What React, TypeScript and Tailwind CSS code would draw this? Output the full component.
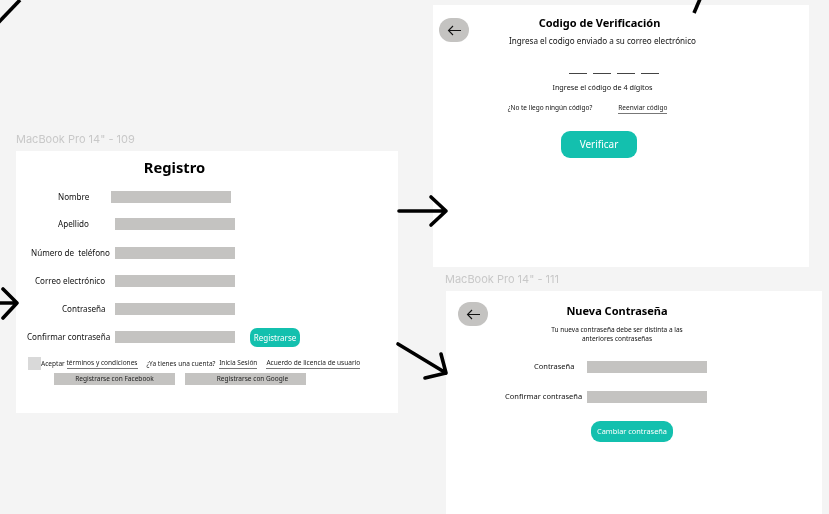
const font = { fontFamily: '"Noto Sans", sans-serif' };

function BackButton({ className }: { className: string }) {
  return (
    <div className={`flex h-[24px] w-[30px] items-center justify-center rounded-full bg-[#c4c3c1] ${className}`}>
      <svg width="15" height="11" viewBox="0 0 15 11" fill="none" stroke="#111" strokeWidth="1.1">
        <path d="M14 5.5H1.5M6 1L1.5 5.5L6 10" />
      </svg>
    </div>
  );
}

function Field({ label, labelClass, rowClass }: { label: string; labelClass: string; rowClass: string }) {
  return (
    <div className={`flex h-[12px] items-center ${rowClass}`}>
      <span className={`shrink-0 whitespace-nowrap leading-none text-[#111] ${labelClass}`}>{label}</span>
      <div className="h-[12px] w-[120px] shrink-0 bg-[#c4c3c1]" />
    </div>
  );
}

function Link({ children, className = "" }: { children: string; className?: string }) {
  return <span className={`whitespace-nowrap border-b border-[#777] pb-px text-[#222] ${className}`}>{children}</span>;
}

export default function App() {
  return (
    <div className="relative h-[514px] w-[829px] overflow-hidden bg-[#f4f4f4] blur-[0.35px]" style={font}>
      <div className="absolute left-[16px] top-[132px] font-['Inter'] text-[11px] leading-[14px] text-[#c8c8c8]">MacBook Pro 14" - 109</div>
      <div className="absolute left-[445px] top-[272px] font-['Inter'] text-[11px] leading-[14px] text-[#c8c8c8]">MacBook Pro 14" - 111</div>

      {/* Registro */}
      <section className="absolute left-[16px] top-[151px] h-[262px] w-[382px] bg-white">
        <h1 className="pr-[65px] pt-[6px] text-center text-[14.7px] font-bold leading-[20px] text-black">Registro</h1>
        <Field rowClass="mt-[14px]" label="Nombre" labelClass="w-[95px] pl-[42px] text-[8.1px]" />
        <Field rowClass="mt-[15px]" label="Apellido" labelClass="w-[99px] pl-[42px] text-[8.1px]" />
        <Field rowClass="mt-[17px]" label={"Número de\u00a0 teléfono"} labelClass="w-[99px] pl-[15px] text-[8.1px]" />
        <Field rowClass="mt-[16px]" label="Correo electrónico" labelClass="w-[99px] pl-[19px] text-[8.1px]" />
        <Field rowClass="mt-[16px]" label="Contraseña" labelClass="w-[99px] pl-[46px] text-[8.1px]" />
        <div className="relative">
          <Field rowClass="mt-[16px]" label="Confirmar contraseña" labelClass="w-[99px] pl-[11px] text-[8.1px]" />
          <button className="absolute left-[234px] top-[-3px] flex h-[19px] w-[50px] items-center justify-center rounded-[7px] bg-[#13c0ae] text-[8px] text-white">Registrarse</button>
        </div>
        <div className="mt-[14px] flex h-[13px] items-center pl-[12px] text-[6.55px] text-[#222]">
          <div className="h-[13px] w-[13px] shrink-0 bg-[#d9d9d9]" />
          <span className="whitespace-nowrap">Aceptar&nbsp;</span>
          <Link>términos y condiciones</Link>
          <span className="ml-[9px] whitespace-nowrap">¿Ya tienes una cuenta?&nbsp;</span>
          <Link className="ml-[2px]">Inicia Sesión</Link>
          <Link className="ml-[9px]">Acuerdo de licencia de usuario</Link>
        </div>
        <div className="mt-[3px] flex gap-[10px] pl-[38px]">
          <div className="flex h-[12px] w-[121px] items-center justify-center bg-[#c4c3c1] text-[6.55px] text-[#222]">Registrarse con Facebook</div>
          <div className="flex h-[12px] w-[121px] items-center justify-center bg-[#c4c3c1] pl-[14px] text-[6.55px] text-[#222]">Registrarse con Google</div>
        </div>
      </section>

      {/* Código */}
      <section className="absolute left-[433px] top-[5px] flex h-[262px] w-[376px] flex-col items-center bg-white pr-[37px] text-[#111]">
        <BackButton className="absolute left-[6px] top-[13px]" />
        <h2 className="mr-[6px] pt-[10px] text-[11px] font-bold leading-[15px] text-black">Codigo de Verificación</h2>
        <p className="mt-[5px] text-[8.15px] leading-[11px]">Ingresa el codigo enviado a su correo electrónico</p>
        <div className="ml-[23px] mt-[27px] flex gap-[6px]">
          <div className="h-px w-[18px] bg-[#444]" />
          <div className="h-px w-[18px] bg-[#444]" />
          <div className="h-px w-[18px] bg-[#444]" />
          <div className="h-px w-[18px] bg-[#444]" />
        </div>
        <p className="mt-[8px] text-[7.25px] leading-[10px]">Ingrese el código de 4 dígitos</p>
        <div className="mr-[30px] mt-[11px] flex gap-[26px] text-[6.5px] leading-[9px]">
          <span>¿No te llego ningún código?</span>
          <Link>Reenviar código</Link>
        </div>
        <button className="mr-[7px] mt-[17px] flex h-[27px] w-[76px] items-center justify-center rounded-[9px] bg-[#13c0ae] text-[10px] text-white">Verificar</button>
      </section>

      {/* Nueva contraseña */}
      <section className="absolute left-[446px] top-[291px] flex h-[223px] w-[376px] flex-col items-center bg-white pr-[34px] text-[#111]">
        <BackButton className="absolute left-[12px] top-[11px]" />
        <h2 className="pt-[12px] text-[11px] font-bold leading-[15px] text-black">Nueva Contraseña</h2>
        <p className="mt-[7px] text-center text-[6.5px] leading-[9px]">Tu nueva contraseña debe ser distinta a las<br />anteriores contraseñas</p>
        <div className="w-full">
          <Field rowClass="mt-[18px]" label="Contraseña" labelClass="w-[141px] pl-[88px] text-[7.5px]" />
          <Field rowClass="mt-[18px]" label="Confirmar contraseña" labelClass="w-[141px] pl-[59px] text-[7.5px]" />
        </div>
        <button className="ml-[30px] mt-[18px] flex h-[21px] w-[82px] items-center justify-center rounded-[9px] bg-[#13c0ae] text-[7.4px] text-white">Cambiar contraseña</button>
      </section>

      {/* Connector arrows */}
      <svg className="absolute inset-0" width="829" height="514" fill="none" stroke="#000" strokeWidth="3.6" strokeLinecap="round" strokeLinejoin="round">
        <path d="M20 0L-2 23" strokeLinecap="butt" />
        <path d="M-8 303H17M3 289L17 303L3 318" />
        <path d="M399 211H446M431 197L446 211L431 225" />
        <path d="M398 344L446 373M441 354L446 373L425 378" />
        <path d="M700 -1L694 13" strokeLinecap="butt" />
      </svg>
    </div>
  );
}
